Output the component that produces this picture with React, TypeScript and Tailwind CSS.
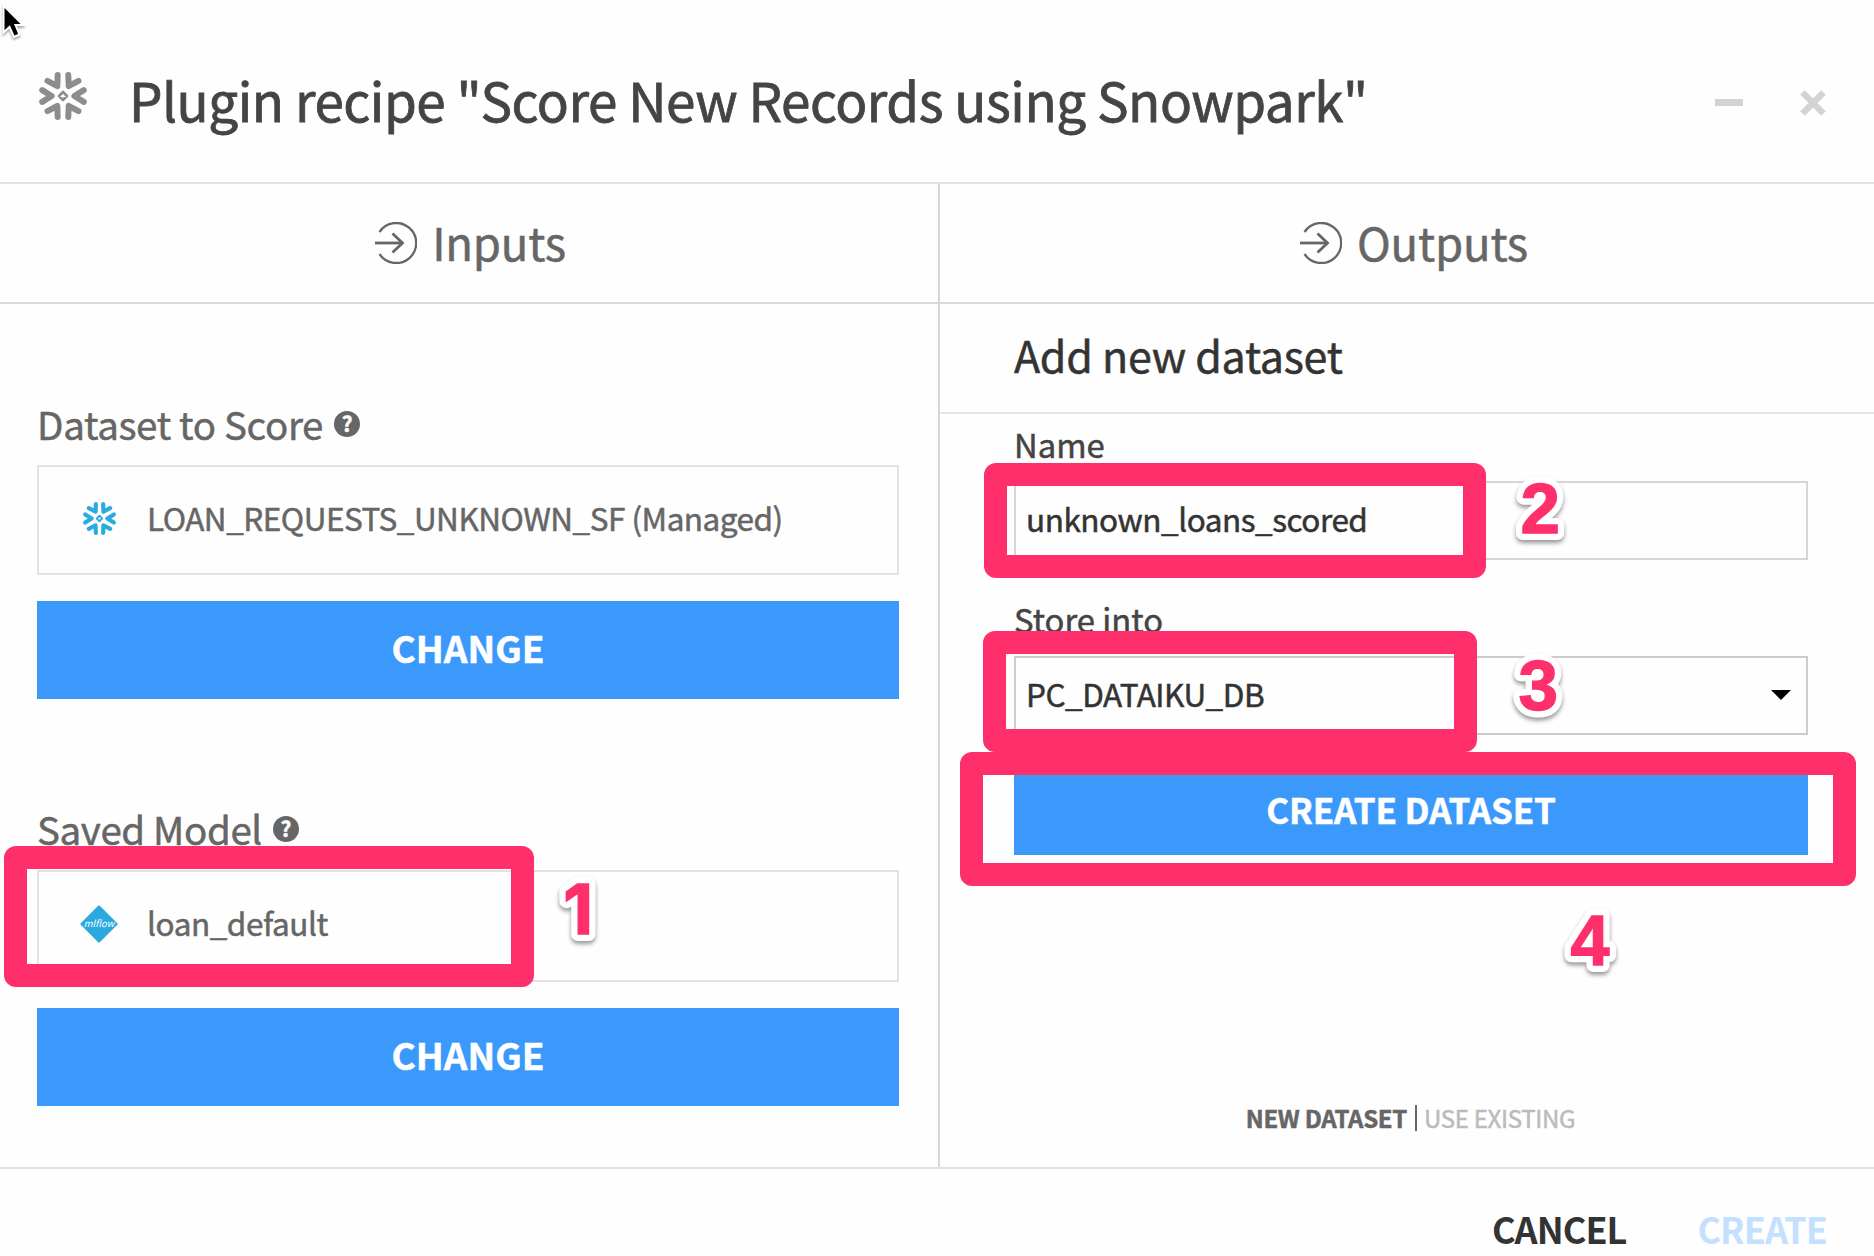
import React from "react";

function Snowflake({ className }: { className: string }) {
  return (
    <svg viewBox="0 0 48 48" className={className} fill="none" stroke="currentColor" strokeWidth="6" strokeLinecap="round" strokeLinejoin="round">
      {[0, 60, 120, 180, 240, 300].map((a) => (
        <path key={a} transform={`rotate(${a} 24 24)`} d="M3.2 18.1 L12.6 24 L3.2 29.9" />
      ))}
      <path d="M24 20 L28 24 L24 28 L20 24 Z" strokeWidth="2.6" />
    </svg>
  );
}

function EnterIcon({ className }: { className: string }) {
  return (
    <svg viewBox="0 0 42 42" className={className} fill="none" stroke="currentColor" strokeWidth="2.3">
      <path d="M4.5 10 A20 20 0 1 1 4.5 32" />
      <path d="M0 21 H28" strokeWidth="2.8" />
      <path d="M17.5 11.5 L27.5 21 L17.5 30.5" strokeWidth="2.8" />
    </svg>
  );
}

function HelpIcon() {
  return (
    <span className="flex h-[26px] w-[26px] items-center justify-center rounded-full bg-[#666] pb-[2px] text-[21px] font-bold leading-none tracking-normal text-white">
      ?
    </span>
  );
}

function Panel({ title, className, headingClass, children }: { title: string; className: string; headingClass: string; children: React.ReactNode }) {
  return (
    <section className={className}>
      <h2 className={`flex h-[120px] shrink-0 items-center justify-center border-b-2 border-[#d9d9d9] text-[45.5px] leading-none tracking-[-0.2px] text-[#666] ${headingClass}`}>
        <EnterIcon className="-mt-[1px] mr-[15px] h-[42px] w-[42px]" />
        <span className="-mt-[2px]">{title}</span>
      </h2>
      {children}
    </section>
  );
}

function Frame({ className }: { className: string }) {
  return <div className={`pointer-events-none absolute rounded-xl border-[23px] border-[#ff2f6c] ${className}`} />;
}

function Digit({ children, className }: { children: string; className: string }) {
  return (
    <svg
      viewBox="0 0 70 90"
      className={`pointer-events-none absolute h-[90px] w-[70px] overflow-visible font-bold drop-shadow-[0_3px_2px_rgba(0,0,0,0.4)] ${className}`}
    >
      <text x="35" y="70" textAnchor="middle" fill="#fff" stroke="#fff" strokeWidth="14" strokeLinejoin="round">{children}</text>
      <text x="35" y="70" textAnchor="middle" fill="#ff2f6c" stroke="#ff2f6c" strokeWidth="1.4">{children}</text>
    </svg>
  );
}

export default function App() {
  return (
    <div className="flex h-[1256px] w-[1874px] flex-col overflow-hidden bg-[#fefefe] font-['Noto_Sans_CJK_SC','Source_Sans_Pro',sans-serif] [-webkit-text-stroke:0.5px_currentColor]">
      <header className="relative flex h-[184px] shrink-0 items-center border-b-2 border-[#e2e2e2]">
        <svg viewBox="0 0 28 42" className="absolute left-0 top-0 h-[42px] w-[28px] drop-shadow-[0_2px_1px_rgba(0,0,0,0.35)]">
          <path d="M3.5 5.5 V32.5 L9.5 27 L14 37 L19.5 34.5 L15.5 25 H23 Z" fill="#000" stroke="#fff" strokeWidth="2" />
        </svg>
        <Snowflake className="ml-[39px] mt-[9px] h-[48px] w-[48px] text-[#8d8d8d]" />
        <h1 className="ml-[42px] mt-[17px] whitespace-nowrap text-[53px] leading-none tracking-[-0.5px] text-[#444] [-webkit-text-stroke:0.8px_currentColor]">
          Plugin recipe "Score New Records using Snowpark"
        </h1>
        <div className="ml-auto mr-[48px] mt-[23px] flex items-center text-[#d3d3d3]">
          <div className="mr-[57px] h-[7px] w-[28px] bg-current" />
          <svg viewBox="0 0 26 26" className="h-[26px] w-[26px]" stroke="currentColor" strokeWidth="6.5">
            <path d="M2.5 2.5 L23.5 23.5 M23.5 2.5 L2.5 23.5" />
          </svg>
        </div>
      </header>

      <main className="flex h-[983px] shrink-0">
        <Panel title="Inputs" className="w-[940px] shrink-0 border-r-2 border-[#d6d6d6]" headingClass="pl-[3px]">
          <div className="pl-[37px] pr-[39px] pt-[99px]">
            <div className="flex h-[62px] items-start gap-[11px] text-[38.5px] leading-[48px] tracking-[-0.35px] text-[#666]">
              <span className="-mt-[4px]">Dataset to Score</span>
              <span className="mt-[8px]"><HelpIcon /></span>
            </div>
            <div className="flex h-[110px] items-center border-2 border-[#e2e2e2] pb-[3px] pl-[44px]">
              <Snowflake className="h-[33px] w-[33px] text-[#29abe2]" />
              <span className="-mt-[2px] ml-[31px] text-[31.5px] leading-none tracking-[-0.5px] text-[#666]">LOAN_REQUESTS_UNKNOWN_SF (Managed)</span>
            </div>
            <button className="mt-[26px] block h-[98px] w-full bg-[#3b99fc] pb-[5px] text-[37px] font-bold leading-none text-white">CHANGE</button>

            <div className="mt-[109px] flex h-[62px] items-start gap-[11px] text-[38.5px] leading-[48px] tracking-[-0.38px] text-[#666]">
              <span className="-mt-[4px]">Saved Model</span>
              <span className="mt-[8px]"><HelpIcon /></span>
            </div>
            <div className="relative flex h-[112px] items-center border-2 border-[#e2e2e2] pb-[4px] pl-[41px]">
              <svg viewBox="0 0 38 38" className="h-[38px] w-[38px]">
                <path d="M19 2 L36 19 L19 36 L2 19 Z" fill="#29a9dd" stroke="#29a9dd" strokeWidth="3" strokeLinejoin="round" />
                <text x="19" y="22" textAnchor="middle" fill="#fff" fontSize="9.5" fontStyle="italic">mlflow</text>
              </svg>
              <span className="-mt-[2px] ml-[29px] text-[31.5px] leading-none tracking-[-0.45px] text-[#666]">loan_default</span>
              <Frame className="-left-[35px] -top-[26px] h-[141px] w-[530px]" />
              <Digit className="left-[504px] top-[-8px] font-['Inter'] text-[69px]">1</Digit>
            </div>
            <button className="mt-[26px] block h-[98px] w-full bg-[#3b99fc] pb-[5px] text-[37px] font-bold leading-none text-white">CHANGE</button>
          </div>
        </Panel>

        <Panel title="Outputs" className="flex flex-1 flex-col" headingClass="pl-[14px]">
          <div className="flex h-[110px] items-center border-b-2 border-[#e5e5e5] pb-[7px] pl-[74px] text-[43px] leading-none tracking-[-0.28px] text-[#333]">
            <span>Add new dataset</span>
          </div>
          <div className="pl-[74px] pr-[66px] pt-[13px]">
            <label className="block h-[54px] text-[32.8px] leading-[33px] text-[#444]">Name</label>
            <div className="relative flex h-[79px] items-center border-2 border-[#d6d6d6] pb-[3px] pl-[10px] text-[31.5px] leading-none tracking-[-0.47px] text-[#333]">
              <span>unknown_loans_scored</span>
              <Frame className="-left-[32px] -top-[20px] h-[115px] w-[502px]" />
              <Digit className="left-[489px] top-[-20px] font-['Liberation_Sans'] text-[71px]">2</Digit>
            </div>
            <label className="mt-[42px] block h-[54px] text-[32.8px] leading-[34px] text-[#444]">Store into</label>
            <div className="relative flex h-[79px] items-center border-2 border-[#ccc] pb-[3px] pl-[10px] text-[31.5px] leading-none tracking-[-0.5px] text-[#333]">
              <span>PC_DATAIKU_DB</span>
              <svg viewBox="0 0 20 10" className="ml-auto mr-[15px] mt-[2px] h-[10px] w-[20px]"><path d="M0 0 H20 L10 10 Z" /></svg>
              <Frame className="-left-[33px] -top-[27px] h-[121px] w-[494px]" />
              <Digit className="left-[487px] top-[-18px] font-['Liberation_Sans'] text-[71px]">3</Digit>
            </div>
            <div className="relative mt-[21px]">
              <button className="block h-[99px] w-full bg-[#3b99fc] pt-[5px] text-[35px] font-bold leading-none tracking-[-0.15px] text-white">CREATE DATASET</button>
              <Frame className="-left-[54px] -top-[4px] h-[134px] w-[896px]" />
              <Digit className="left-[541px] top-[139px] font-['Liberation_Sans'] text-[70px]">4</Digit>
            </div>
          </div>
          <div className="mt-auto flex h-[98px] items-center justify-center pl-[7px] text-[24px] leading-none tracking-[-0.3px]">
            <span className="font-bold text-[#666]">NEW DATASET</span>
            <span className="mx-[7.5px] h-[26px] w-[2px] bg-[#666]" />
            <span className="text-[#bbb]">USE EXISTING</span>
          </div>
        </Panel>
      </main>

      <footer className="flex flex-1 items-center justify-end gap-[71px] border-t-2 border-[#e0e0e0] pr-[47px] pt-[31px] text-[36px] font-bold leading-none tracking-[-0.95px] [-webkit-text-stroke:0px]">
        <span className="text-[#333]">CANCEL</span>
        <span className="text-[#c3e0ff]">CREATE</span>
      </footer>
    </div>
  );
}
